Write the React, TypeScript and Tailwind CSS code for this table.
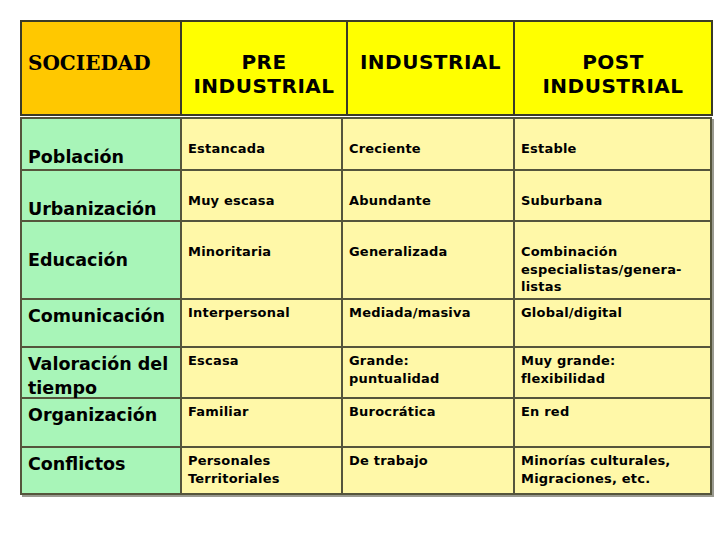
import React from "react";

type Row = {
  label: string[];
  cells: string[][];
  h: number;
  top: "lo" | "hi";
};

const rows: Row[] = [
  { label: ["Población"], cells: [["Estancada"], ["Creciente"], ["Estable"]], h: 52, top: "lo" },
  { label: ["Urbanización"], cells: [["Muy escasa"], ["Abundante"], ["Suburbana"]], h: 51, top: "lo" },
  {
    label: ["Educación"],
    cells: [["Minoritaria"], ["Generalizada"], ["Combinación", "especialistas/genera-", "listas"]],
    h: 78,
    top: "lo",
  },
  { label: ["Comunicación"], cells: [["Interpersonal"], ["Mediada/masiva"], ["Global/digital"]], h: 48, top: "hi" },
  {
    label: ["Valoración del", "tiempo"],
    cells: [["Escasa"], ["Grande:", "puntualidad"], ["Muy grande:", "flexibilidad"]],
    h: 51,
    top: "hi",
  },
  { label: ["Organización"], cells: [["Familiar"], ["Burocrática"], ["En red"]], h: 49, top: "hi" },
  {
    label: ["Conflictos"],
    cells: [["Personales", "Territoriales"], ["De trabajo"], ["Minorías culturales,", "Migraciones, etc."]],
    h: 47,
    top: "hi",
  },
];

function Lines({ lines }: { lines: string[] }) {
  return (
    <>
      {lines.map((l, i) => (
        <div key={i}>{l}</div>
      ))}
    </>
  );
}

export default function App() {
  return (
    <div className="h-[546px] w-[728px] bg-white pl-5 pt-5 font-['DejaVu_Sans',sans-serif] font-bold text-black">
      {/* header */}
      <div className="grid h-[96px] w-[693px] grid-cols-[158px_166px_167px_198px] border-2 border-[#3b3b28] text-[20px] leading-6 tracking-[0.5px]">
        <div className="bg-[#ffc800] pl-1.5 pt-[29px] font-['DejaVu_Serif',serif] text-[20px] tracking-normal">
          SOCIEDAD
        </div>
        <div className="border-l-2 border-[#3b3b28] bg-[#ffff00] pt-7 text-center">
          PRE
          <br />
          INDUSTRIAL
        </div>
        <div className="border-l-2 border-[#3b3b28] bg-[#ffff00] pt-7 text-center">INDUSTRIAL</div>
        <div className="border-l-2 border-[#3b3b28] bg-[#ffff00] pt-7 text-center">
          POST
          <br />
          INDUSTRIAL
        </div>
      </div>

      {/* body */}
      <div className="mt-px w-[692px] border-2 border-[#55553c] shadow-[2px_2px_0_#9a9a90]">
        {rows.map((r, i) => (
          <div
            key={i}
            className={`grid grid-cols-[158px_161px_172px_197px] grid-rows-1 ${i > 0 ? "border-t-2 border-[#55553c]" : ""}`}
            style={{ height: r.h - (i > 0 ? 0 : 2) }}
          >
            <div
              className={`min-h-0 bg-[#a8f5b8] pl-1.5 text-[17.5px] leading-6 ${r.top === "lo" ? "pt-[26px]" : "pt-[4px]"}`}
            >
              <Lines lines={r.label} />
            </div>
            {r.cells.map((c, j) => (
              <div
                key={j}
                className={`min-h-0 border-l-2 border-[#55553c] bg-[#fff8a8] pl-1.5 text-[13px] leading-[17.5px] tracking-[0.2px] ${
                  r.top === "lo" ? "pt-[21px]" : "pt-[4px]"
                }`}
              >
                <Lines lines={c} />
              </div>
            ))}
          </div>
        ))}
      </div>
    </div>
  );
}
